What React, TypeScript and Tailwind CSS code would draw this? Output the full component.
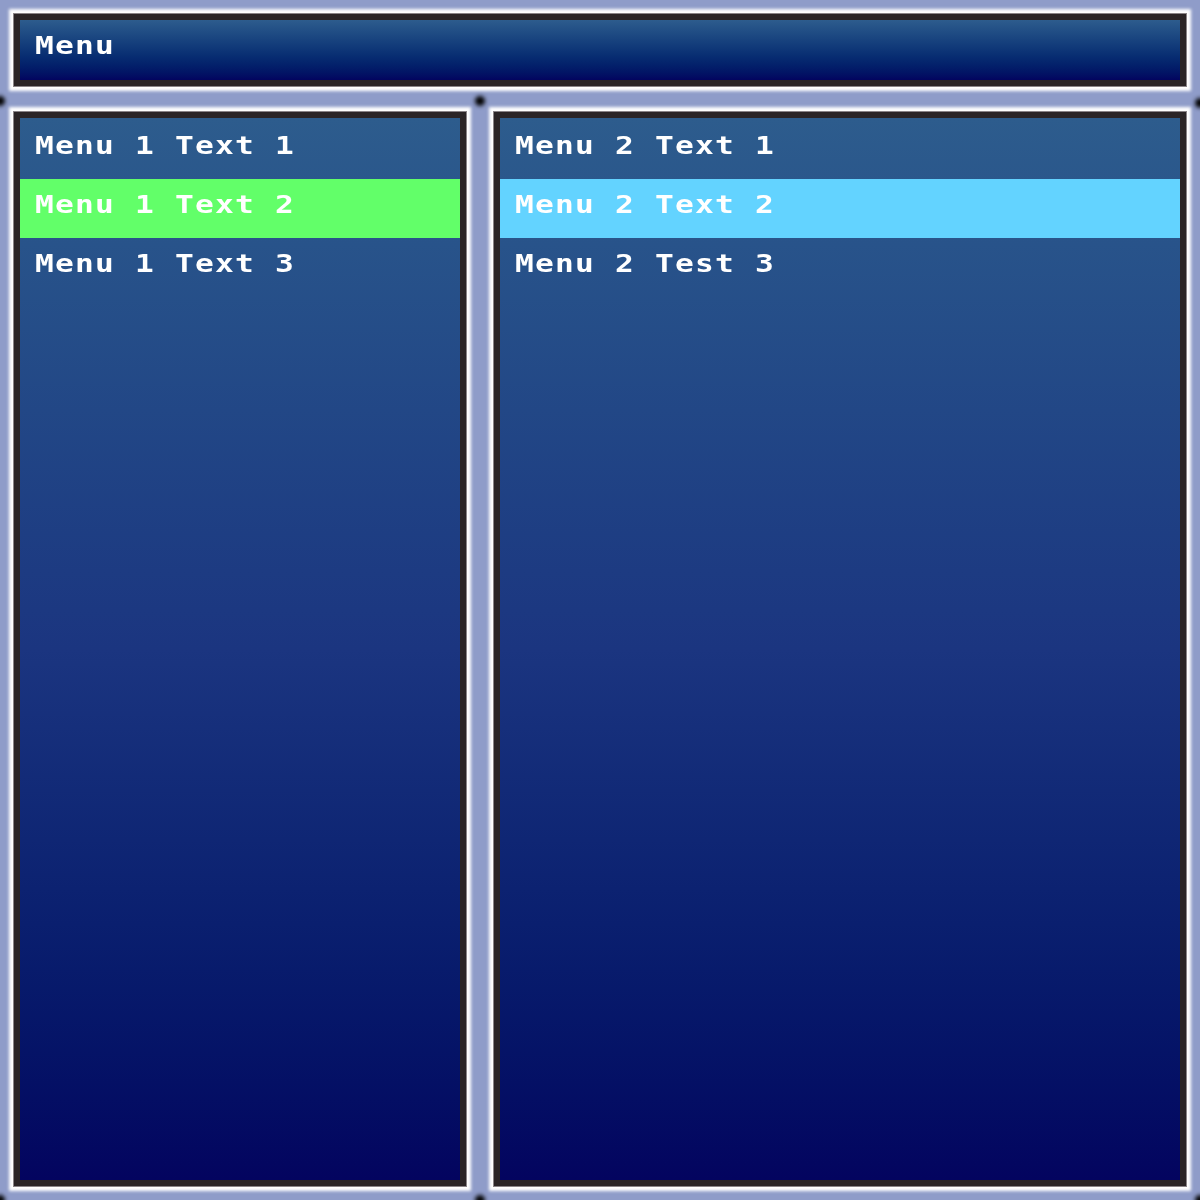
import React from "react";

const font = { fontFamily: '"DejaVu Sans Mono", "Liberation Mono", monospace' };

function Row({ text, bg }: { text: string; bg?: string }) {
  return (
    <div className={`h-[59px] pt-[14px] pl-[15px] ${bg ?? ""}`}>
      <span
        className="inline-block origin-left scale-x-[1.3] text-[24px] leading-[24px] font-bold tracking-[0.93px] text-white whitespace-pre"
        style={font}
      >
        {text}
      </span>
    </div>
  );
}

function Win({ className, children }: { className?: string; children?: React.ReactNode }) {
  return (
    <div
      className={`border-[6px] border-[#2b2527] shadow-[0_0_0_1px_#8a8488,0_0_3px_5px_#ffffff] ${className ?? ""}`}
    >
      <div className="w-full h-full bg-gradient-to-b from-[#2d5c8d] via-[#1b3580] to-[#03045f]">
        {children}
      </div>
    </div>
  );
}

function Dot({ className }: { className: string }) {
  return <div className={`absolute w-[10px] h-[10px] rounded-full bg-black blur-[2px] ${className}`} />;
}

export default function App() {
  return (
    <div className="relative w-[1200px] h-[1200px] bg-[#8f9cc9] p-[14px] flex flex-col gap-[26px] overflow-hidden">
      <Win className="h-[72px] shrink-0">
        <div className="w-full h-full bg-gradient-to-b from-[#2d5c8d] to-[#03045f]">
          <Row text="Menu" />
        </div>
      </Win>
      <div className="flex-1 flex gap-[28px] min-h-0">
        <Win className="w-[452px] shrink-0">
          <div className="pt-[2px]">
            <Row text="Menu 1 Text 1" />
            <Row text="Menu 1 Text 2" bg="bg-[#62ff69]" />
            <Row text="Menu 1 Text 3" />
          </div>
        </Win>
        <Win className="flex-1">
          <div className="pt-[2px]">
            <Row text="Menu 2 Text 1" />
            <Row text="Menu 2 Text 2" bg="bg-[#63d3ff]" />
            <Row text="Menu 2 Test 3" />
          </div>
        </Win>
      </div>
      <Dot className="left-[-5px] top-[96px]" />
      <Dot className="left-[475px] top-[96px]" />
      <Dot className="left-[1195px] top-[98px]" />
      <Dot className="left-[475px] top-[1195px]" />
      <Dot className="left-[-5px] top-[1195px]" />
      <Dot className="left-[1195px] top-[1195px]" />
    </div>
  );
}
